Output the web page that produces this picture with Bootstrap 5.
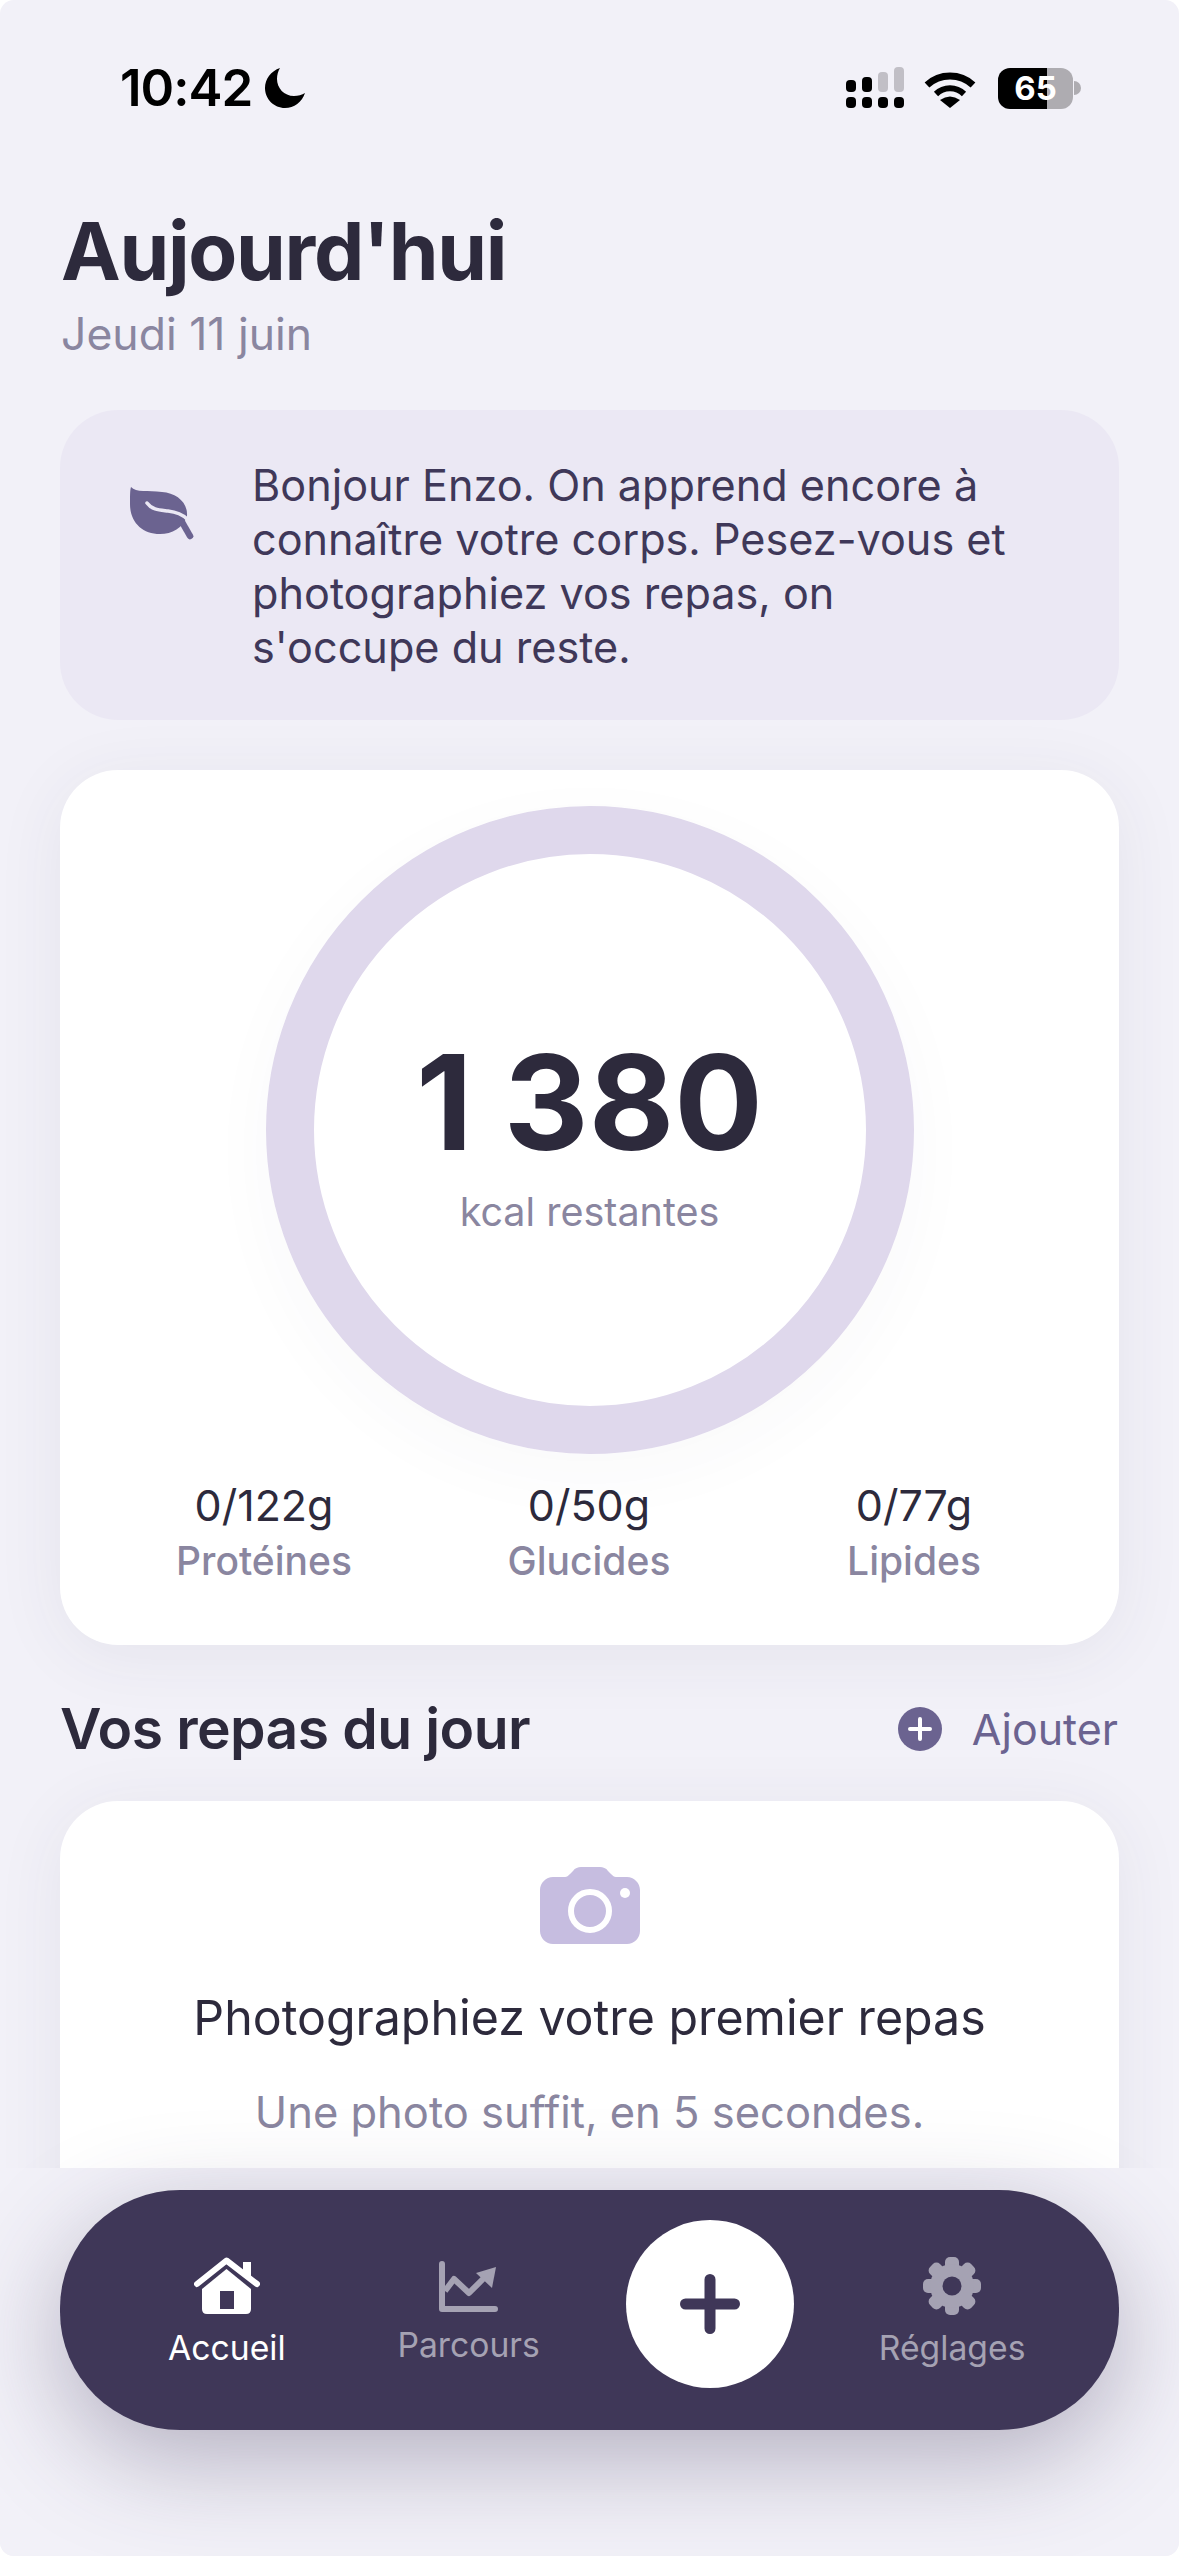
<!DOCTYPE html>
<html lang="fr">
<head>
    <meta charset="UTF-8">
    <meta name="viewport" content="width=device-width, initial-scale=1.0">
    <title>Aujourd'hui</title>
    <link href="https://cdn.jsdelivr.net/npm/bootstrap@5.3.0/dist/css/bootstrap.min.css" rel="stylesheet">
    <style>
        html, body { width: 1179px; height: 2556px; margin: 0; background: #fff; overflow: hidden; }
        body { font-family: "Inter", "Noto Sans", sans-serif; color: #2d2a3c; }
        .screen { width: 1179px; height: 2556px; background: #f2f1f8; border-radius: 14px; overflow: hidden; position: relative; }

        /* status bar */
        .status-row { height: 203px; padding: 60px 98px 0 120px; }
        .clock { font-size: 51px; line-height: 56px; font-weight: 600; color: #000; letter-spacing: -1px; }
        .moon-ico { margin-left: 4px; }
        .status-right { margin-top: 7px; }
        .wifi-ico { margin: 3px 22px 0 18px; }
        .batt { width: 75px; height: 41px; border-radius: 12px; background: linear-gradient(90deg, #000 65%, #aeacb1 65%); color: #fff; font-size: 33px; font-weight: 700; line-height: 41px; text-align: center; }
        .batt-nub { width: 7px; height: 14px; background: #aeacb1; border-radius: 0 7px 7px 0; margin-left: 1px; }

        .page-wrap { padding: 0 60px; }
        .page-title { font-size: 80px; line-height: 96px; font-weight: 700; letter-spacing: -1.3px; margin: 0 0 0 1px; color: #2d2a3c; }
        .page-date { font-size: 44.5px; line-height: 52px; color: #8a86a0; margin: 9px 0 0 1px; }

        .hello-box { background: #ebe8f4; border-radius: 58px; height: 310px; margin-top: 50px; padding: 48px 105px 0 70px; gap: 58px; }
        .hello-box svg { flex: none; margin-top: 28px; }
        .hello-text { font-size: 43.2px; line-height: 54px; color: #3f3859; }

        .ring-card { background: #fff; border: 0; border-radius: 58px; height: 875px; margin-top: 50px; box-shadow: 0 10px 70px rgba(61, 53, 88, .07); }
        .ring-box { width: 648px; height: 648px; margin: 36px auto 0; position: relative; }
        .ring-circle { width: 648px; height: 648px; border-radius: 50%; border: 48px solid #dfd8ec; box-shadow: 0 20px 70px rgba(61, 53, 88, .03); }
        .ring-inner { position: absolute; inset: 0; padding-top: 232px; text-align: center; }
        .ring-num { font-size: 131.5px; line-height: 130px; font-weight: 700; color: #2d2a3c; }
        .ring-sub { font-size: 39.5px; line-height: 46px; color: #8a86a0; margin-top: 21px; }
        .macro-row { margin-top: 26px; padding: 0 80px 0 79px; }
        .macro-col { width: 250px; text-align: center; }
        .macro-val { font-size: 43px; line-height: 50px; color: #2d2a3c; }
        .macro-name { font-size: 39px; line-height: 50px; font-weight: 500; color: #8a86a0; margin-top: 6px; }

        .sec-head { margin-top: 50px; height: 106px; padding-bottom: 38px; }
        .sec-title { font-size: 57px; line-height: 70px; font-weight: 600; letter-spacing: -.6px; margin: 0; color: #2d2a3c; }
        .add-link { font-size: 43px; line-height: 50px; color: #6b6390; gap: 30px; margin-right: 1px; }

        .meal-card { background: #fff; border: 0; border-radius: 58px; height: 500px; padding-top: 66px; text-align: center; box-shadow: 0 10px 70px rgba(61, 53, 88, .07); }
        .meal-title { font-size: 48.3px; line-height: 60px; color: #2d2a3c; margin-top: 44px; }
        .meal-sub { font-size: 43.5px; line-height: 54px; color: #8a86a0; margin-top: 37px; }

        /* bottom bar, sits over the page */
        .bottom-zone { position: absolute; left: 0; right: 0; bottom: 0; height: 388px; background: #f2f1f8; padding: 22px 60px 0; }
        .tab-pill { height: 240px; background: #3f3758; border-radius: 120px / 118px; padding: 67px 46px 0 46px; box-shadow: 0 30px 100px rgba(61, 53, 88, .34); }
        .tab-item { width: 242px; font-size: 33.7px; line-height: 40px; color: #a5a2b3; }
        .tab-item.is-on { color: #fff; }
        .tab-item span { margin-top: 13px; }
        .tab-fab { width: 168px; height: 168px; border-radius: 50%; background: #fff; margin: -37px auto 0; }
    </style>
</head>

<body>
    <div class="screen">
        <!-- status bar -->
        <div class="status-row d-flex justify-content-between align-items-start">
            <div class="d-flex align-items-center gap-2">
                <span class="clock">10:42</span>
                <svg class="moon-ico" width="42" height="42" viewBox="0 0 42 42"><path fill="#000" d="M16 1C7 4 1 12 1 21c0 11 9 20 20 20 9 0 17-6 20-15-3 2-7 3-11 3C20 29 13 21 13 12c0-4 1-8 3-11z"/></svg>
            </div>
            <div class="status-right d-flex align-items-center">
                <svg width="60" height="42" viewBox="0 0 60 42">
                    <rect x="0" y="13" width="10" height="12" rx="4" fill="#000"/>
                    <rect x="16" y="10" width="10" height="15" rx="4" fill="#000"/>
                    <rect x="32" y="5" width="10" height="20" rx="4" fill="#c1bfc6"/>
                    <rect x="48" y="0" width="10" height="25" rx="4" fill="#c1bfc6"/>
                    <rect x="0" y="30" width="10" height="11" rx="4" fill="#000"/>
                    <rect x="16" y="30" width="10" height="11" rx="4" fill="#000"/>
                    <rect x="32" y="30" width="10" height="11" rx="4" fill="#000"/>
                    <rect x="48" y="30" width="10" height="11" rx="4" fill="#000"/>
                </svg>
                <svg class="wifi-ico" width="52" height="38" viewBox="0 0 52 38">
                    <path d="M3 14A34 34 0 0 1 49 14" fill="none" stroke="#000" stroke-width="7"/>
                    <path d="M12 23A20 20 0 0 1 40 23" fill="none" stroke="#000" stroke-width="6"/>
                    <path d="M26 37L16 29Q26 22 36 29Z" fill="#000"/>
                </svg>
                <div class="batt">65</div>
                <div class="batt-nub"></div>
            </div>
        </div>

        <div class="page-wrap">
            <h1 class="page-title">Aujourd'hui</h1>
            <div class="page-date">Jeudi 11 juin</div>

            <!-- greeting -->
            <div class="hello-box d-flex align-items-start">
                <svg width="64" height="56" viewBox="0 0 64 56">
                    <path fill="#6b6390" d="M1 1C6 7 18 4 32 6c14 1 26 10 25 24-4 12-15 18-27 18C12 48 0 36 0 18 0 10 0 4 1 1z"/>
                    <path fill="none" stroke="#ebe8f4" stroke-width="3.5" stroke-linecap="round" d="M17 17c5 7 13 7 21 8 8 1 14 3 19 8"/>
                    <path fill="none" stroke="#6b6390" stroke-width="6.5" stroke-linecap="round" d="M52 36l8 14"/>
                </svg>
                <div class="hello-text">Bonjour Enzo. On apprend encore à connaître votre corps. Pesez-vous et photographiez vos repas, on s'occupe du reste.</div>
            </div>

            <!-- ring -->
            <div class="card ring-card">
                <div class="ring-box">
                    <div class="ring-circle"></div>
                    <div class="ring-inner">
                        <div class="ring-num">1 380</div>
                        <div class="ring-sub">kcal restantes</div>
                    </div>
                </div>
                <div class="macro-row d-flex justify-content-between">
                    <div class="macro-col"><div class="macro-val">0/122g</div><div class="macro-name">Protéines</div></div>
                    <div class="macro-col"><div class="macro-val">0/50g</div><div class="macro-name">Glucides</div></div>
                    <div class="macro-col"><div class="macro-val">0/77g</div><div class="macro-name">Lipides</div></div>
                </div>
            </div>

            <!-- meals -->
            <div class="sec-head d-flex justify-content-between align-items-center">
                <h2 class="sec-title">Vos repas du jour</h2>
                <div class="add-link d-flex align-items-center">
                    <svg width="44" height="44" viewBox="0 0 44 44">
                        <circle cx="22" cy="22" r="22" fill="#6b6390"/>
                        <path d="M22 12V32M12 22H32" stroke="#fff" stroke-width="4" stroke-linecap="round"/>
                    </svg>
                    <span>Ajouter</span>
                </div>
            </div>
            <div class="card meal-card">
                <div>
                    <svg width="100" height="77" viewBox="0 0 100 77">
                        <path fill="#c6bde0" d="M13 10H25c2 0 3-1 5-3l3-3c2-3 5-4 8-4H60c3 0 6 1 8 4l3 3c2 2 3 3 5 3H87c7 0 13 6 13 13V64c0 7-6 13-13 13H13C6 77 0 71 0 64V23c0-7 6-13 13-13z"/>
                        <circle cx="50" cy="44" r="19" fill="none" stroke="#fff" stroke-width="6"/>
                        <circle cx="85" cy="26" r="5" fill="#fff"/>
                    </svg>
                </div>
                <div class="meal-title">Photographiez votre premier repas</div>
                <div class="meal-sub">Une photo suffit, en 5 secondes.</div>
            </div>
        </div>

        <!-- bottom tab bar -->
        <div class="bottom-zone">
            <div class="tab-pill d-flex">
                <div class="tab-item is-on d-flex flex-column align-items-center">
                    <svg width="66" height="58" viewBox="0 0 66 58">
                        <rect x="49" y="5" width="8" height="15" fill="#fff"/>
                        <path fill="#fff" d="M8 32L32.5 12 57 32V52q0 5-5 5H13q-5 0-5-5z"/>
                        <path d="M3 27L32.5 3.5 63 27" fill="none" stroke="#fff" stroke-width="6" stroke-linecap="round" stroke-linejoin="round"/>
                        <rect x="26" y="34" width="14" height="18" fill="#3f3758"/>
                    </svg>
                    <span>Accueil</span>
                </div>
                <div class="tab-item d-flex flex-column align-items-center">
                    <svg class="mt-1" width="60" height="51" viewBox="0 0 60 51">
                        <path d="M3 3V48H56" fill="none" stroke="#a5a2b3" stroke-width="6" stroke-linecap="round" stroke-linejoin="round"/>
                        <path d="M6 30L15 18 30 32 45 17" fill="none" stroke="#a5a2b3" stroke-width="6" stroke-linejoin="round"/>
                        <path d="M37 12L57 6 53 27z" fill="#a5a2b3"/>
                    </svg>
                    <span>Parcours</span>
                </div>
                <div class="tab-item">
                    <div class="tab-fab d-flex align-items-center justify-content-center">
                        <svg width="60" height="60" viewBox="0 0 60 60"><path d="M30 5.5V54.5M5.5 30H54.5" stroke="#3f3758" stroke-width="11" stroke-linecap="round"/></svg>
                    </div>
                </div>
                <div class="tab-item d-flex flex-column align-items-center">
                    <svg width="58" height="58" viewBox="0 0 58 58" fill="#a5a2b3">
                        <rect x="22" y="0" width="14" height="58" rx="5"/>
                        <rect x="22" y="0" width="14" height="58" rx="5" transform="rotate(45 29 29)"/>
                        <rect x="22" y="0" width="14" height="58" rx="5" transform="rotate(90 29 29)"/>
                        <rect x="22" y="0" width="14" height="58" rx="5" transform="rotate(135 29 29)"/>
                        <circle cx="29" cy="29" r="22"/>
                        <circle cx="29" cy="29" r="9.5" fill="#3f3758"/>
                    </svg>
                    <span>Réglages</span>
                </div>
            </div>
        </div>
    </div>

    <script src="https://cdn.jsdelivr.net/npm/bootstrap@5.3.0/dist/js/bootstrap.bundle.min.js"></script>
</body>
</html>
